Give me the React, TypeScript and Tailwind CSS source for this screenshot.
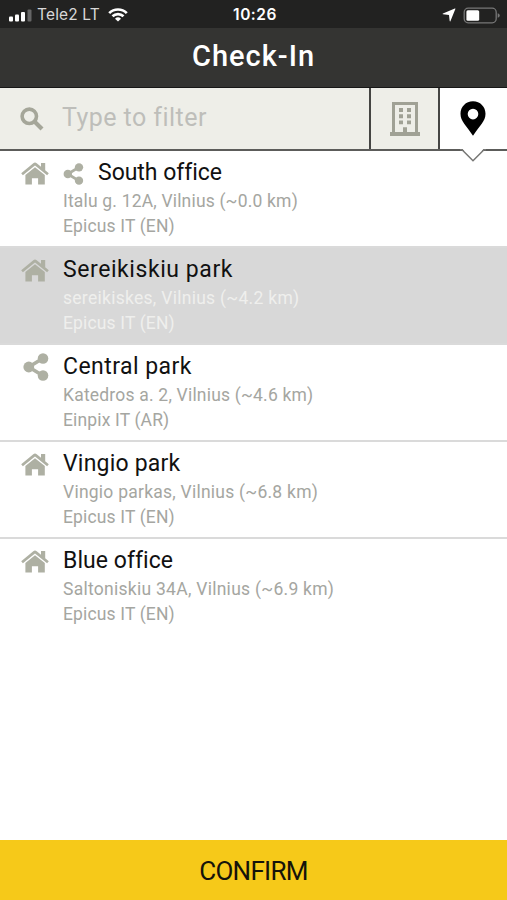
import React from "react";

type IconProps = { className?: string };

function HomeIcon({ className = "" }: IconProps) {
  return (
    <svg viewBox="0 0 28 23" className={className} fill="currentColor">
      <path d="M12.3 1.2Q14-.2 15.7 1.2L20 4.8V1h4.2v7.2l3.6 3-1.7 2L14 3.4 1.9 13.2.2 11.2Z" />
      <path d="M14 5.2 4.4 13V22.6h6.5v-6.4h6.2v6.4h6.7V13Z" />
    </svg>
  );
}

function ShareIcon({ className = "" }: IconProps) {
  return (
    <svg viewBox="0 0 26 28" className={className}>
      <path d="M20 5.2 5.8 14 20 22.8" fill="none" stroke="currentColor" strokeWidth="3.6" />
      <circle cx="20" cy="5.5" r="5.3" fill="currentColor" />
      <circle cx="5.8" cy="14" r="5.4" fill="currentColor" />
      <circle cx="20" cy="22.5" r="5.3" fill="currentColor" />
    </svg>
  );
}

type Place = {
  name: string;
  nameTracking: string;
  address: string;
  addressTracking: string;
  company: string;
  home?: boolean;
  share?: boolean;
  selected?: boolean;
};

const places: Place[] = [
  { name: "South office", nameTracking: "tracking-[-0.03px]", address: "Italu g. 12A, Vilnius (~0.0 km)", addressTracking: "tracking-[0.18px]", company: "Epicus IT (EN)", home: true, share: true },
  { name: "Sereikiskiu park", nameTracking: "tracking-[0.57px]", address: "sereikiskes, Vilnius (~4.2 km)", addressTracking: "tracking-[0.28px]", company: "Epicus IT (EN)", home: true, selected: true },
  { name: "Central park", nameTracking: "tracking-[0.45px]", address: "Katedros a. 2, Vilnius (~4.6 km)", addressTracking: "tracking-[0.2px]", company: "Einpix IT (AR)", share: true },
  { name: "Vingio park", nameTracking: "tracking-[0.2px]", address: "Vingio parkas, Vilnius (~6.8 km)", addressTracking: "tracking-[0.24px]", company: "Epicus IT (EN)", home: true },
  { name: "Blue office", nameTracking: "tracking-[0.05px]", address: "Saltoniskiu 34A, Vilnius (~6.9 km)", addressTracking: "tracking-[0.27px]", company: "Epicus IT (EN)", home: true },
];

function PlaceRow({ place, last }: { place: Place; last: boolean }) {
  return (
    <li className={`flex h-[97px] border-b-2 ${last ? "border-transparent" : "border-[#dadada]"} ${place.selected ? "bg-[#d8d8d8]" : "bg-white"}`}>
      <div className="w-[63px] shrink-0 pl-[21px] text-[#aeb0a3]">
        {place.home ? <HomeIcon className="mt-[11px] h-[23px] w-7" /> : <ShareIcon className="ml-[2px] mt-[8px] h-7 w-[26px]" />}
      </div>
      <div className="whitespace-nowrap pt-[6px]">
        <div className="flex h-[31px] items-center">
          {place.home && place.share && <ShareIcon className="mr-[14px] mt-[2px] h-[22px] w-[21px] text-[#aeb0a3]" />}
          <h2 className={`text-[23px] leading-[31px] text-[#111] ${place.nameTracking}`}>{place.name}</h2>
        </div>
        <p className={`text-[17.5px] leading-[26px] ${place.selected ? "text-[#efefed]" : "text-[#a5a6a1]"} ${place.addressTracking}`}>{place.address}</p>
        <p className={`text-[17.5px] leading-[25px] tracking-[0.15px] ${place.selected ? "text-[#efefed]" : "text-[#a5a6a1]"}`}>{place.company}</p>
      </div>
    </li>
  );
}

export default function App() {
  return (
    <div className="flex h-[900px] w-[507px] flex-col overflow-hidden bg-white font-['Roboto',sans-serif]">
      <div className="grid h-7 shrink-0 grid-cols-3 items-center bg-[#222221] text-white">
        <div className="flex items-center pl-[9px] pt-[2px]">
          <svg viewBox="0 0 23 13" className="h-[13px] w-[23px]" fill="#fff">
            <rect x="0" y="7.5" width="4" height="5" rx="1" />
            <rect x="6" y="5.5" width="4" height="7" rx="1" />
            <rect x="12" y="3" width="4" height="9.5" rx="1" />
            <rect x="18.5" y="0.5" width="4" height="12" rx="1" fill="#666" />
          </svg>
          <span className="ml-[5px] whitespace-nowrap font-['Inter',sans-serif] text-[15.5px] leading-5 tracking-[0.15px] text-[#d8d8d8]">Tele2 LT</span>
          <svg viewBox="0 0 20 14" className="ml-[8px] h-[14px] w-5" fill="none" stroke="#fff" strokeWidth="2.7">
            <path d="M1.2 5.1a12.6 12.6 0 0 1 17.6 0" />
            <path d="M4.5 8.3a7.9 7.9 0 0 1 11 0" />
            <path d="M10 13.6 7 10.7a4.3 4.3 0 0 1 6 0Z" fill="#fff" stroke="none" />
          </svg>
        </div>
        <div className="pl-[3px] pt-[2px] text-center font-['Inter',sans-serif] text-[15.5px] font-semibold leading-5 tracking-[0.5px]">10:26</div>
        <div className="flex items-center justify-end pr-[7px] pt-[2px]">
          <svg viewBox="0 0 13 13" className="mr-[7px] h-[14px] w-[14px]" fill="#fff">
            <path d="M11.9.5q.8-.3.5.5L7.9 12q-.5 1-.8-.1L6.5 6.5 1 5.9q-1-.3-.1-.8Z" />
          </svg>
          <svg viewBox="0 0 37 17" className="h-[17px] w-[37px]">
            <rect x="1.2" y="1.2" width="32" height="14.6" rx="4" fill="none" stroke="#777" strokeWidth="1.3" />
            <rect x="3.4" y="3.3" width="12.8" height="10.4" rx="1.5" fill="#fff" />
            <path d="M34.7 6.2q2 .5 2 2.3t-2 2.3Z" fill="#777" />
          </svg>
        </div>
      </div>

      <header className="flex h-[60px] shrink-0 items-center justify-center border-b border-[#171717] bg-[#343432] pb-[3px]">
        <h1 className="text-[29px] font-medium leading-10 tracking-[1px] text-white">Check-In</h1>
      </header>

      <div className="flex h-[63px] shrink-0 border-b-2 border-[#5c5c5a] bg-[#eeeee8]">
        <div className="flex flex-1 items-center">
          <svg viewBox="0 0 24 24" className="ml-5 mt-px h-6 w-6" fill="none" stroke="#a5a699">
            <circle cx="9.3" cy="9.3" r="7.2" strokeWidth="3.6" />
            <path d="m14.7 14.7 7.3 7.3" strokeWidth="4.2" />
          </svg>
          <input
            placeholder="Type to filter"
            className="ml-[18px] mb-[2px] w-[220px] bg-transparent text-[25px] leading-8 tracking-[0.45px] outline-none placeholder:text-[#bebeba]"
          />
        </div>
        <button className="flex w-[69px] justify-center border-l-2 border-[#454543] pt-[14px]">
          <svg viewBox="0 0 30 35" className="h-[34px] w-[30px]" fill="#a0a195" preserveAspectRatio="none">
            <path fillRule="evenodd" d="M2 0h26v31h2v4H0v-4h2ZM5 3v28h8v-5h4v5h8V3Z" />
            <path d="M9 6.3h4v4H9zM17 6.3h4v4h-4zM9 12.7h4v4H9zM17 12.7h4v4h-4zM9 19h4v4H9zM17 19h4v4h-4z" />
          </svg>
        </button>
        <button className="relative flex w-[69px] justify-center border-l-2 border-[#454543] bg-white pt-[13px]">
          <svg viewBox="0 0 26 35" className="mr-px h-[35px] w-[26px]">
            <path fillRule="evenodd" d="M13 .3C5.8.3.5 5.8.5 12.8.5 20.4 6.3 24.5 13 34.8 19.7 24.5 25.5 20.4 25.5 12.8 25.5 5.8 20.2.3 13 .3Zm0 7.5a5.3 5.3 0 1 1 0 10.6 5.3 5.3 0 0 1 0-10.6Z" />
          </svg>
          <svg viewBox="0 0 26 15" className="absolute left-[20px] top-[60px] h-[15px] w-[26px]">
            <path d="M1.5 0 13 12.5 24.5 0Z" fill="#fff" />
            <path d="M0 1.7h2L13 12.7 24 1.7h2" fill="none" stroke="#777775" strokeWidth="1.5" />
          </svg>
        </button>
      </div>

      <ul className="flex-1">
        {places.map((place, i) => (
          <PlaceRow key={place.name} place={place} last={i === places.length - 1} />
        ))}
      </ul>

      <button className="flex h-[60px] shrink-0 items-center justify-center bg-[#f6c919] text-[26px] leading-8 tracking-[-0.7px] text-[#15130a]">
        <span className="pt-[2px]">CONFIRM</span>
      </button>
    </div>
  );
}
